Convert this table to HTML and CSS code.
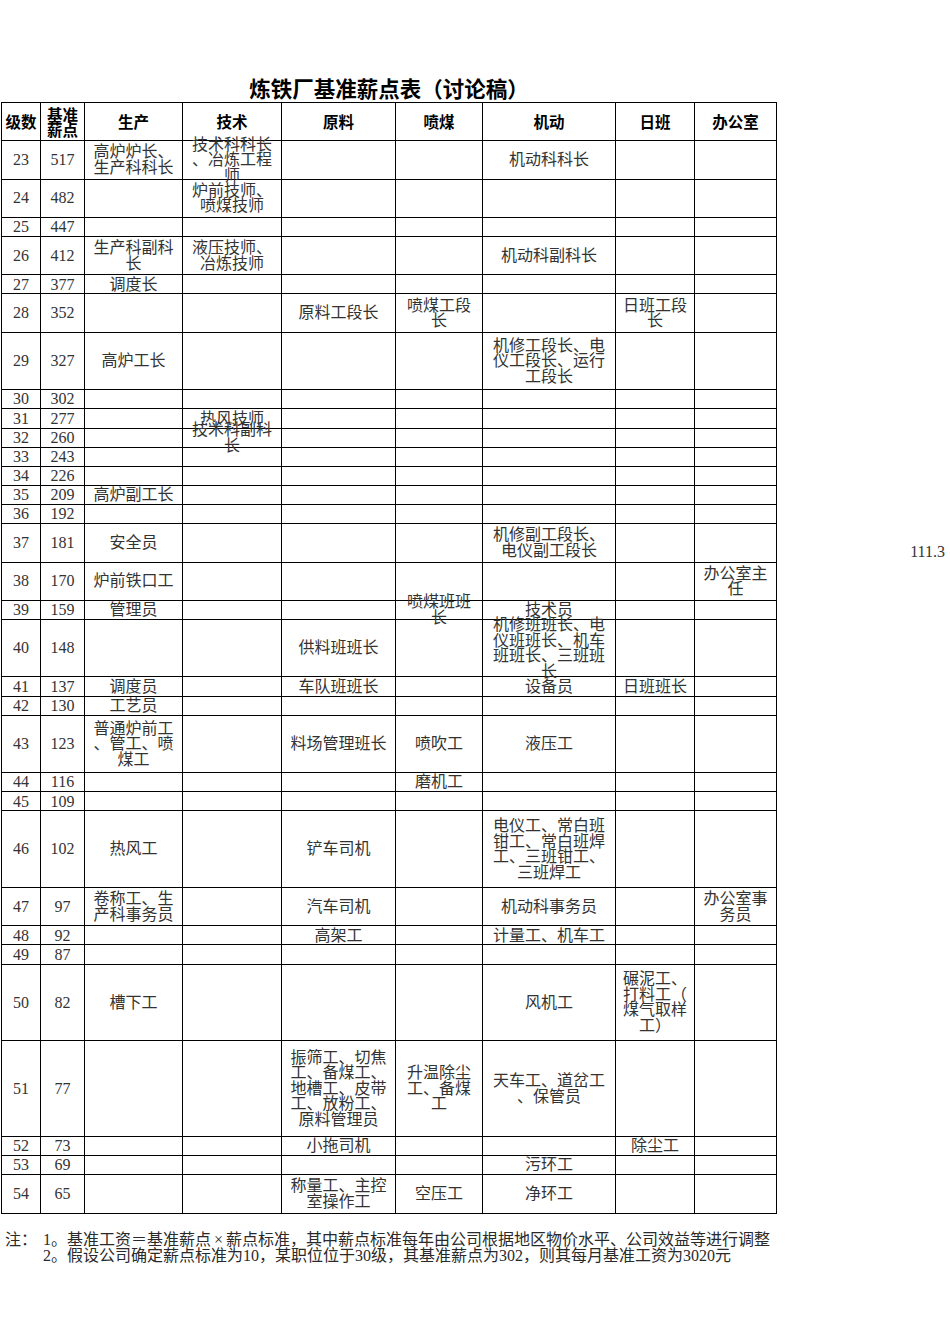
FILE: index.html
```html
<!DOCTYPE html>
<html lang="zh-CN">
<head>
<meta charset="utf-8">
<title>炼铁厂基准薪点表（讨论稿）</title>
<link rel="stylesheet" href="styles.css">
</head>
<body>
<div class="page">
  <div class="title">炼铁厂基准薪点表（讨论稿）</div>
  <div class="sheet">
    <div class="grid rows">
      <div class="c h">级数</div><div class="c h tight">基准<br>薪点</div><div class="c h">生产</div><div class="c h">技术</div><div class="c h">原料</div><div class="c h">喷煤</div><div class="c h">机动</div><div class="c h">日班</div><div class="c h">办公室</div>

      <div class="c">23</div><div class="c">517</div><div class="c">高炉炉长、<br>生产科科长</div><div class="c">技术科科长<br>、冶炼工程<br>师</div><div class="c"></div><div class="c"></div><div class="c">机动科科长</div><div class="c"></div><div class="c"></div>

      <div class="c">24</div><div class="c">482</div><div class="c"></div><div class="c">炉前技师、<br>喷煤技师</div><div class="c"></div><div class="c"></div><div class="c"></div><div class="c"></div><div class="c"></div>

      <div class="c">25</div><div class="c">447</div><div class="c"></div><div class="c"></div><div class="c"></div><div class="c"></div><div class="c"></div><div class="c"></div><div class="c"></div>

      <div class="c">26</div><div class="c">412</div><div class="c">生产科副科<br>长</div><div class="c">液压技师、<br>冶炼技师</div><div class="c"></div><div class="c"></div><div class="c">机动科副科长</div><div class="c"></div><div class="c"></div>

      <div class="c">27</div><div class="c">377</div><div class="c">调度长</div><div class="c"></div><div class="c"></div><div class="c"></div><div class="c"></div><div class="c"></div><div class="c"></div>

      <div class="c">28</div><div class="c">352</div><div class="c"></div><div class="c"></div><div class="c">原料工段长</div><div class="c">喷煤工段<br>长</div><div class="c"></div><div class="c">日班工段<br>长</div><div class="c"></div>

      <div class="c">29</div><div class="c">327</div><div class="c">高炉工长</div><div class="c"></div><div class="c"></div><div class="c"></div><div class="c">机修工段长、电<br>仪工段长、运行<br>工段长</div><div class="c"></div><div class="c"></div>

      <div class="c">30</div><div class="c">302</div><div class="c"></div><div class="c"></div><div class="c"></div><div class="c"></div><div class="c"></div><div class="c"></div><div class="c"></div>

      <div class="c">31</div><div class="c">277</div><div class="c"></div><div class="c">热风技师</div><div class="c"></div><div class="c"></div><div class="c"></div><div class="c"></div><div class="c"></div>

      <div class="c">32</div><div class="c">260</div><div class="c"></div><div class="c">技术科副科<br>长</div><div class="c"></div><div class="c"></div><div class="c"></div><div class="c"></div><div class="c"></div>

      <div class="c">33</div><div class="c">243</div><div class="c"></div><div class="c"></div><div class="c"></div><div class="c"></div><div class="c"></div><div class="c"></div><div class="c"></div>

      <div class="c">34</div><div class="c">226</div><div class="c"></div><div class="c"></div><div class="c"></div><div class="c"></div><div class="c"></div><div class="c"></div><div class="c"></div>

      <div class="c">35</div><div class="c">209</div><div class="c">高炉副工长</div><div class="c"></div><div class="c"></div><div class="c"></div><div class="c"></div><div class="c"></div><div class="c"></div>

      <div class="c">36</div><div class="c">192</div><div class="c"></div><div class="c"></div><div class="c"></div><div class="c"></div><div class="c"></div><div class="c"></div><div class="c"></div>

      <div class="c">37</div><div class="c">181</div><div class="c">安全员</div><div class="c"></div><div class="c"></div><div class="c"></div><div class="c">机修副工段长、<br>电仪副工段长</div><div class="c"></div><div class="c"></div>

      <div class="c">38</div><div class="c">170</div><div class="c">炉前铁口工</div><div class="c"></div><div class="c"></div><div class="c"></div><div class="c"></div><div class="c"></div><div class="c">办公室主<br>任</div>

      <div class="c">39</div><div class="c">159</div><div class="c">管理员</div><div class="c"></div><div class="c"></div><div class="c">喷煤班班<br>长</div><div class="c">技术员</div><div class="c"></div><div class="c"></div>

      <div class="c">40</div><div class="c">148</div><div class="c"></div><div class="c"></div><div class="c">供料班班长</div><div class="c"></div><div class="c">机修班班长、电<br>仪班班长、机车<br>班班长、三班班<br>长</div><div class="c"></div><div class="c"></div>

      <div class="c">41</div><div class="c">137</div><div class="c">调度员</div><div class="c"></div><div class="c">车队班班长</div><div class="c"></div><div class="c">设备员</div><div class="c">日班班长</div><div class="c"></div>

      <div class="c">42</div><div class="c">130</div><div class="c">工艺员</div><div class="c"></div><div class="c"></div><div class="c"></div><div class="c"></div><div class="c"></div><div class="c"></div>

      <div class="c">43</div><div class="c">123</div><div class="c">普通炉前工<br>、管工、喷<br>煤工</div><div class="c"></div><div class="c">料场管理班长</div><div class="c">喷吹工</div><div class="c">液压工</div><div class="c"></div><div class="c"></div>

      <div class="c">44</div><div class="c">116</div><div class="c"></div><div class="c"></div><div class="c"></div><div class="c">磨机工</div><div class="c"></div><div class="c"></div><div class="c"></div>

      <div class="c">45</div><div class="c">109</div><div class="c"></div><div class="c"></div><div class="c"></div><div class="c"></div><div class="c"></div><div class="c"></div><div class="c"></div>

      <div class="c">46</div><div class="c">102</div><div class="c">热风工</div><div class="c"></div><div class="c">铲车司机</div><div class="c"></div><div class="c">电仪工、常白班<br>钳工、常白班焊<br>工、三班钳工、<br>三班焊工</div><div class="c"></div><div class="c"></div>

      <div class="c">47</div><div class="c">97</div><div class="c">卷称工、生<br>产科事务员</div><div class="c"></div><div class="c">汽车司机</div><div class="c"></div><div class="c">机动科事务员</div><div class="c"></div><div class="c">办公室事<br>务员</div>

      <div class="c">48</div><div class="c">92</div><div class="c"></div><div class="c"></div><div class="c">高架工</div><div class="c"></div><div class="c">计量工、机车工</div><div class="c"></div><div class="c"></div>

      <div class="c">49</div><div class="c">87</div><div class="c"></div><div class="c"></div><div class="c"></div><div class="c"></div><div class="c"></div><div class="c"></div><div class="c"></div>

      <div class="c">50</div><div class="c">82</div><div class="c">槽下工</div><div class="c"></div><div class="c"></div><div class="c"></div><div class="c">风机工</div><div class="c">碾泥工、<br>打料工（<br>煤气取样<br>工）</div><div class="c"></div>

      <div class="c">51</div><div class="c">77</div><div class="c"></div><div class="c"></div><div class="c">振筛工、切焦<br>工、备煤工、<br>地槽工、皮带<br>工、放粉工、<br>原料管理员</div><div class="c">升温除尘<br>工、备煤<br>工</div><div class="c">天车工、道岔工<br>、保管员</div><div class="c"></div><div class="c"></div>

      <div class="c">52</div><div class="c">73</div><div class="c"></div><div class="c"></div><div class="c">小拖司机</div><div class="c"></div><div class="c"></div><div class="c">除尘工</div><div class="c"></div>

      <div class="c">53</div><div class="c">69</div><div class="c"></div><div class="c"></div><div class="c"></div><div class="c"></div><div class="c">污环工</div><div class="c"></div><div class="c"></div>

      <div class="c">54</div><div class="c">65</div><div class="c"></div><div class="c"></div><div class="c">称量工、主控<br>室操作工</div><div class="c">空压工</div><div class="c">净环工</div><div class="c"></div><div class="c"></div>
    </div>
    <div class="side rows">
      <div class="val r37">111.3</div>
    </div>
  </div>
  <div class="foot">
    <div class="foot-label">注：</div>
    <div class="foot-lines">
      <div>1。基准工资＝基准薪点<span class="times">×</span>薪点标准，其中薪点标准每年由公司根据地区物价水平、公司效益等进行调整</div>
      <div>2。假设公司确定薪点标准为10，某职位位于30级，其基准薪点为302，则其每月基准工资为3020元</div>
    </div>
  </div>
</div>
</body>
</html>
```

FILE: styles.css
```css
:root {
  --u: 19.155px;
}

body {
  margin: 0;
  background: #fff;
  font-family: "Liberation Serif", "Noto Sans CJK SC", serif;
  color: #2a2a2a;
}

.page {
  padding: 74px 0 0 1px;
}

.title {
  width: 776px;
  height: 28px;
  line-height: 28px;
  text-align: center;
  font-family: "Noto Sans CJK SC", sans-serif;
  font-weight: 700;
  font-size: 21.5px;
  color: #000;
}

.sheet {
  display: flex;
  align-items: flex-start;
}

.rows {
  grid-template-rows:
    calc(var(--u) * 2)
    calc(var(--u) * 2)
    calc(var(--u) * 2)
    var(--u)
    calc(var(--u) * 2)
    var(--u)
    calc(var(--u) * 2)
    calc(var(--u) * 3)
    repeat(7, var(--u))
    calc(var(--u) * 2)
    calc(var(--u) * 2)
    var(--u)
    calc(var(--u) * 3)
    var(--u)
    var(--u)
    calc(var(--u) * 3)
    var(--u)
    var(--u)
    calc(var(--u) * 4)
    calc(var(--u) * 2)
    var(--u)
    var(--u)
    calc(var(--u) * 4)
    calc(var(--u) * 5)
    var(--u)
    var(--u)
    calc(var(--u) * 2);
}

.grid {
  display: grid;
  grid-template-columns: 39px 44px 98px 99px 114px 87px 133px 79px 82px;
  border-top: 1px solid #000;
  border-left: 1px solid #000;
}

.c {
  box-sizing: border-box;
  border-right: 1px solid #000;
  border-bottom: 1px solid #000;
  display: flex;
  align-items: center;
  justify-content: center;
  text-align: center;
  font-size: 16px;
  line-height: 15.6px;
  white-space: nowrap;
  min-width: 0;
  min-height: 0;
  color: #333;
}

.c.h {
  font-family: "Noto Sans CJK SC", sans-serif;
  font-weight: 700;
  font-size: 15.5px;
  color: #000;
}

.c.h.tight {
  line-height: 14.5px;
}

.side {
  display: grid;
  width: 170px;
  padding-top: 1px;
}

.val {
  font-size: 16px;
  line-height: 16px;
  color: #333;
  text-align: right;
  padding: 0 2px 3px 0;
}

.r37 {
  grid-row: 16;
  align-self: end;
}

.foot {
  display: grid;
  grid-template-columns: 38px auto;
  margin-top: 18px;
  padding-left: 4px;
  font-size: 16px;
  line-height: 16.5px;
  color: #2a2a2a;
  white-space: nowrap;
}

.times {
  margin: 0 3px;
}
```
